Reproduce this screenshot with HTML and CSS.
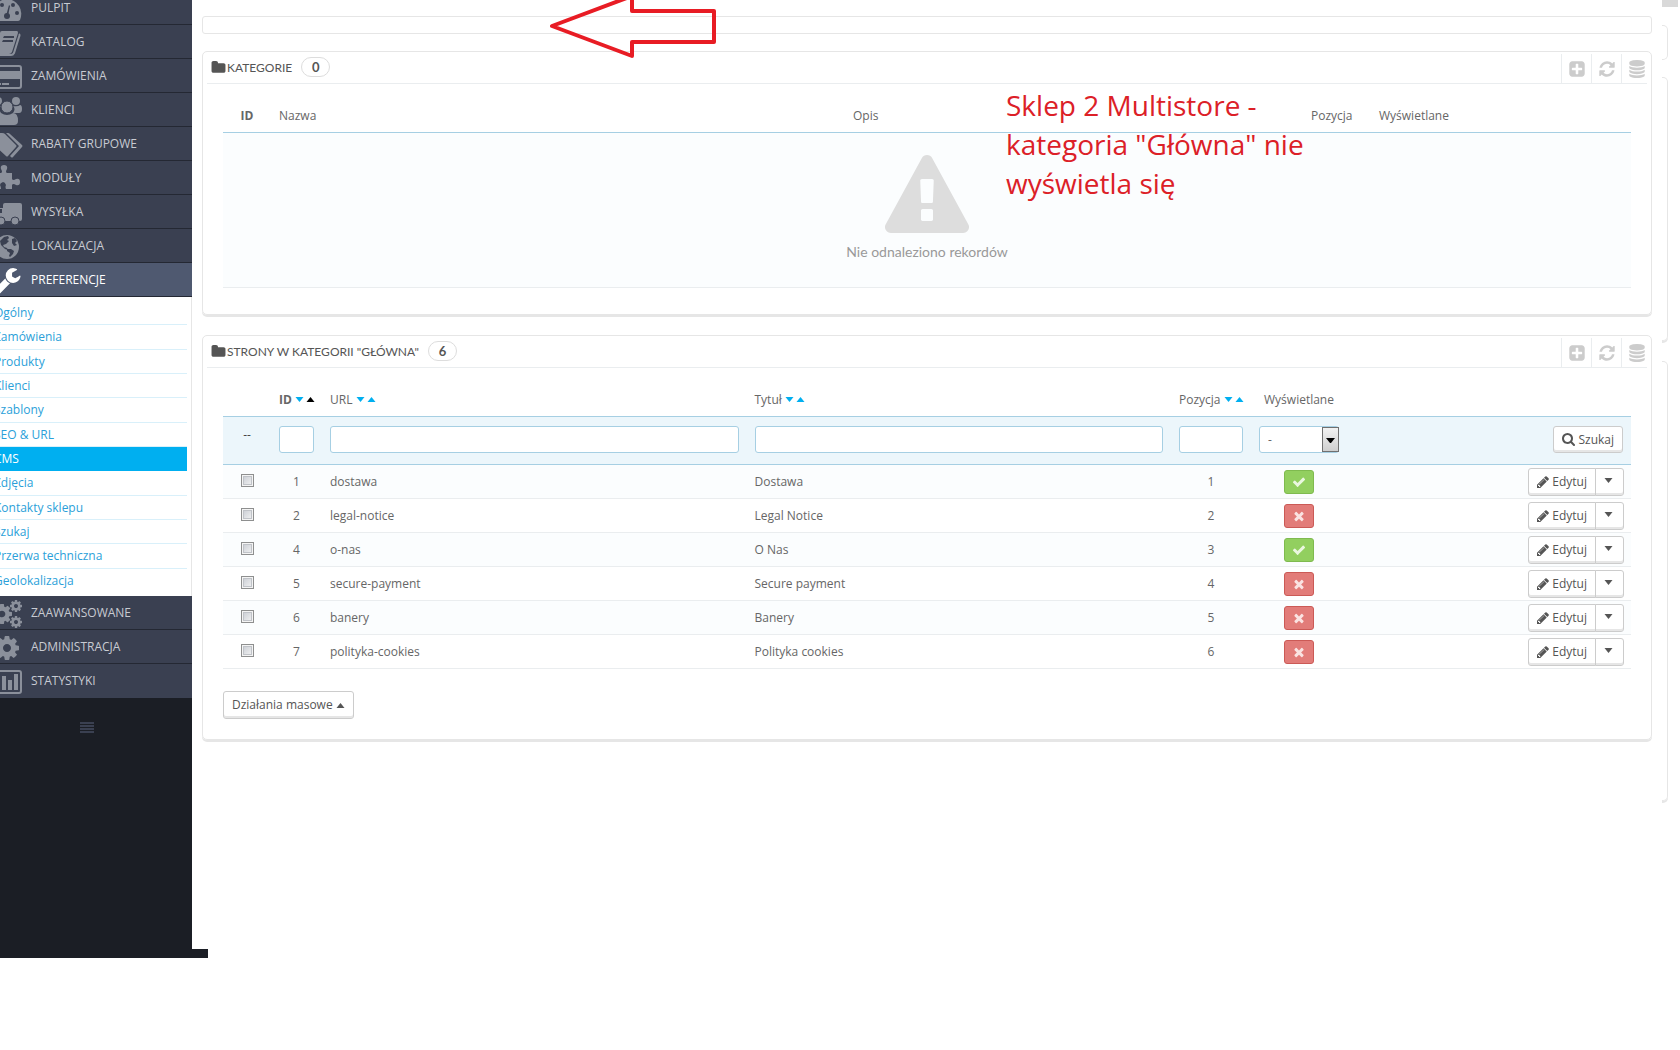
FILE: index.html
```
<!DOCTYPE html>
<html lang="pl">
<head>
    <meta charset="UTF-8">
    <meta name="viewport" content="width=device-width, initial-scale=1.0">
    <title>Preferencje - CMS</title>
    <link rel="stylesheet" href="styles.css">
</head>
<body>

<!-- icons used more than once -->
<svg class="sprite" aria-hidden="true">
    <symbol id="i-folder" viewBox="0 0 1792 1792"><path d="M1728 608v704q0 92-66 158t-158 66h-1216q-92 0-158-66t-66-158v-960q0-92 66-158t158-66h320q92 0 158 66t66 158v32h672q92 0 158 66t66 158z"/></symbol>
    <symbol id="i-plus" viewBox="0 0 1792 1792"><path d="M1408 960v-128q0-26-19-45t-45-19h-320v-320q0-26-19-45t-45-19h-128q-26 0-45 19t-19 45v320h-320q-26 0-45 19t-19 45v128q0 26 19 45t45 19h320v320q0 26 19 45t45 19h128q26 0 45-19t19-45v-320h320q26 0 45-19t19-45zm256-544v960q0 119-84.5 203.5t-203.5 84.5h-960q-119 0-203.5-84.5t-84.5-203.5v-960q0-119 84.5-203.5t203.5-84.5h960q119 0 203.5 84.5t84.5 203.5z"/></symbol>
    <symbol id="i-refresh" viewBox="0 0 1792 1792"><path d="M1639 1056q0 5-1 7-64 268-268 434.5t-478 166.5q-146 0-282.5-55t-243.5-157l-129 129q-19 19-45 19t-45-19-19-45v-448q0-26 19-45t45-19h448q26 0 45 19t19 45-19 45l-137 137q71 66 161 102t187 36q134 0 250-65t186-179q11-17 53-117 8-23 30-23h192q13 0 22.5 9.5t9.5 22.5zm25-800v448q0 26-19 45t-45 19h-448q-26 0-45-19t-19-45 19-45l138-138q-148-137-349-137-134 0-250 65t-186 179q-11 17-53 117-8 23-30 23h-199q-13 0-22.5-9.5t-9.5-22.5v-7q65-268 270-434.5t480-166.5q146 0 284 55.5t245 156.5l130-129q19-19 45-19t45 19 19 45z"/></symbol>
    <symbol id="i-database" viewBox="0 0 1792 1792"><path d="M896 768q237 0 443-43t325-127v170q0 69-103 128t-280 93.5-385 34.5-385-34.5-280-93.5-103-128v-170q119 84 325 127t443 43zm0 768q237 0 443-43t325-127v170q0 69-103 128t-280 93.5-385 34.5-385-34.5-280-93.5-103-128v-170q119 84 325 127t443 43zm0-384q237 0 443-43t325-127v170q0 69-103 128t-280 93.5-385 34.5-385-34.5-280-93.5-103-128v-170q119 84 325 127t443 43zm0-1152q208 0 385 34.5t280 93.5 103 128v128q0 69-103 128t-280 93.5-385 34.5-385-34.5-280-93.5-103-128v-128q0-69 103-128t280-93.5 385-34.5z"/></symbol>
    <symbol id="i-check" viewBox="0 0 1792 1792"><path d="M1671 566q0 40-28 68l-724 724-136 136q-28 28-68 28t-68-28l-136-136-362-362q-28-28-28-68t28-68l136-136q28-28 68-28t68 28l294 295 656-657q28-28 68-28t68 28l136 136q28 28 28 68z"/></symbol>
    <symbol id="i-times" viewBox="0 0 1792 1792"><path d="M1490 1322q0 40-28 68l-136 136q-28 28-68 28t-68-28l-294-294-294 294q-28 28-68 28t-68-28l-136-136q-28-28-28-68t28-68l294-294-294-294q-28-28-28-68t28-68l136-136q28-28 68-28t68 28l294 294 294-294q28-28 68-28t68 28l136 136q28 28 28 68t-28 68l-294 294 294 294q28 28 28 68z"/></symbol>
    <symbol id="i-pencil" viewBox="128 128 1536 1536"><path d="M491 1536l91-91-235-235-91 91v107h128v128h107zm523-928q0-22-22-22-10 0-17 7l-542 542q-7 7-7 17 0 22 22 22 10 0 17-7l542-542q7-7 7-17zm-54-192l416 416-832 832h-416v-416zm683 96q0 53-37 90l-166 166-416-416 166-165q36-38 90-38 53 0 91 38l235 234q37 39 37 91z"/></symbol>
    <symbol id="i-search" viewBox="64 128 1664 1664"><path d="M1216 832q0-185-131.5-316.5t-316.5-131.5-316.5 131.5-131.5 316.5 131.5 316.5 316.5 131.5 316.5-131.5 131.5-316.5zm512 832q0 52-38 90t-90 38q-54 0-90-38l-343-342q-179 124-399 124-143 0-273.5-55.5t-225-150-150-225-55.5-273.5 55.5-273.5 150-225 225-150 273.5-55.5 273.5 55.5 225 150 150 225 55.5 273.5q0 220-124 399l343 343q37 37 37 90z"/></symbol>
    <symbol id="i-cog" viewBox="128 128 1536 1536"><path d="M1152 896q0-106-75-181t-181-75-181 75-75 181 75 181 181 75 181-75 75-181zm512-109v222q0 12-8 23t-20 13l-185 28q-19 54-39 91 35 50 107 138 10 12 10 25t-9 23q-27 37-99 108t-94 71q-12 0-26-9l-138-108q-44 23-91 38-16 136-29 186-7 28-36 28h-222q-14 0-24.5-8.5t-11.5-21.5l-28-184q-49-16-90-37l-141 107q-10 9-25 9-14 0-25-11-126-114-165-168-7-10-7-23 0-12 8-23 15-21 51-66.5t54-70.5q-27-50-41-99l-183-27q-13-2-21-12.5t-8-23.5v-222q0-12 8-23t19-13l186-28q14-46 39-92-40-57-107-138-10-12-10-24 0-10 9-23 26-36 98.5-107.5t94.5-71.5q13 0 26 10l138 107q44-23 91-38 16-136 29-186 7-28 36-28h222q14 0 24.5 8.5t11.5 21.5l28 184q49 16 90 37l142-107q9-9 24-9 13 0 25 10 129 119 165 170 7 8 7 22 0 12-8 23-15 21-51 66.5t-54 70.5q26 50 41 98l183 28q13 2 21 12.5t8 23.5z"/></symbol>
    <symbol id="i-down" viewBox="0 0 8 5"><path d="M0 0h8L4 5z"/></symbol>
    <symbol id="i-up" viewBox="0 0 8 5"><path d="M0 5h8L4 0z"/></symbol>
</svg>

<div class="layout">
    <aside class="sidebar">
        <nav class="nav">
            <a class="nav-item" href="#">
                <svg class="nav-icon" viewBox="-8 0 32 34"><path d="M7 8a15 15 0 0 1 13 21q-1 1-2 1H-4q-1 0-2-1A15 15 0 0 1 7 8z"/><g class="cut"><circle cx="-3" cy="22" r="2"/><circle cx="2" cy="14" r="2"/><circle cx="13" cy="14" r="2"/><circle cx="17" cy="22" r="2"/><circle cx="7" cy="25" r="3"/><path d="M6 25l3-11 1 1-2 10z"/></g></svg>
                Pulpit</a>
            <a class="nav-item" href="#">
                <svg class="nav-icon" viewBox="-8 0 32 34"><path d="M2 6h15q1 0 1 2l-6 19q-1 2-3 2H-7L0 8q0-2 2-2z"/><path class="line" d="M19 9q1 1 0 3l-5 16q-1 2-3 2H-6"/><path class="cut" d="M4 11h10v2H3zM3 15h10v2H2z"/></svg>
                Katalog</a>
            <a class="nav-item" href="#">
                <svg class="nav-icon" viewBox="-8 0 32 34"><rect class="line" x="-7" y="7" width="28" height="22" rx="2"/><path d="M-7 12h28v8H-7zM-3 24h4v2h-4zM2 24h7v2H2z"/></svg>
                Zamówienia</a>
            <a class="nav-item" href="#">
                <svg class="nav-icon" viewBox="-8 0 32 34"><circle cx="-2" cy="8" r="4"/><circle cx="16" cy="8" r="4"/><path d="M13 13q5 1 7-1 2 0 2 4 0 4-3 4h-6q3-4 0-7zM1 13q-5 1-7-1-2 0-2 4 0 4 3 4h6q-3-4 0-7z"/><circle class="halo" cx="7" cy="14" r="6"/><path d="M1 20q6 4 12 0 5 0 5 8 0 4-4 4H0q-4 0-4-4 0-8 5-8z"/></svg>
                Klienci</a>
            <a class="nav-item" href="#">
                <svg class="nav-icon" viewBox="-8 0 32 34"><path d="M-8 8q0-2 2-2h8q2 0 3 1l11 11q1 1 0 2l-8 9q-1 1-2 0L-8 16z"/><path d="M6 6h2q1 0 2 1l12 11q1 1 0 2l-9 10q-1 1-2 0l-1-1 9-10z"/></svg>
                Rabaty grupowe</a>
            <a class="nav-item" href="#">
                <svg class="nav-icon" viewBox="-8 0 32 34"><path d="M-6 12h7q2-1 0-4-1-4 3-4t3 4q-2 3 0 4h5v6q1 2 4 0 4-1 4 3t-4 3q-3-2-4 0v4H6q-1-2 0-4-1-3-3-3-3 1-3 3 1 2 1 4h-7z"/></svg>
                Moduły</a>
            <a class="nav-item" href="#">
                <svg class="nav-icon" viewBox="-8 0 32 34"><path d="M5 8h15q2 0 2 2v14q0 2-2 2H-8v-9l5-4h6v-3q0-2 2-2z"/><path class="cut" d="M-6 18l4-4h4v4z"/><circle class="halo" cx="1" cy="26" r="4"/><circle class="halo" cx="15" cy="26" r="4"/></svg>
                Wysyłka</a>
            <a class="nav-item" href="#">
                <svg class="nav-icon" viewBox="-8 0 32 34"><circle cx="7" cy="18" r="12"/><path class="cut" d="M4 8l4-1 1 2-2 2 2 1-3 3-3 1 1 2 3 1 1 2-3-1-4-4-1-4zM12 10l3-1 2 3-2 2 2 2-3 1-2-3zM7 20l4 0 3 2-1 3-3 3-1-1 1-3-3-2z"/></svg>
                Lokalizacja</a>
            <a class="nav-item active" href="#">
                <svg class="nav-icon" viewBox="-8 0 32 34"><path transform="translate(-8 3) scale(.0165)" d="M1092 1052l-682 682q-37 37-90 37-52 0-91-37l-106-108q-38-36-38-90 0-53 38-91l681-681q39 98 114.5 173.5t173.5 114.5zm634-435q0 39-23 106-47 134-164.5 217.5t-258.5 83.5q-185 0-316.5-131.5t-131.5-316.5 131.5-316.5 316.5-131.5q58 0 121.5 16.5t107.5 46.5q16 11 16 28t-16 28l-293 169v224l193 107q5-3 79-48.5t135.5-81 70.5-35.5q15 0 23.5 10t8.5 25z"/></svg>
                Preferencje</a>

            <div class="submenu">
                <a href="#">Ogólny</a>
                <a href="#">Zamówienia</a>
                <a href="#">Produkty</a>
                <a href="#">Klienci</a>
                <a href="#">Szablony</a>
                <a href="#">SEO &amp; URL</a>
                <a href="#" class="current">CMS</a>
                <a href="#">Zdjęcia</a>
                <a href="#">Kontakty sklepu</a>
                <a href="#">Szukaj</a>
                <a href="#">Przerwa techniczna</a>
                <a href="#">Geolokalizacja</a>
            </div>

            <a class="nav-item" href="#">
                <svg class="nav-icon" viewBox="-8 0 32 34"><use href="#i-cog" x="-8" y="8" width="20" height="20"/><use href="#i-cog" x="10" y="4" width="12" height="12"/><use href="#i-cog" x="10" y="20" width="12" height="12"/></svg>
                Zaawansowane</a>
            <a class="nav-item" href="#">
                <svg class="nav-icon" viewBox="-8 0 32 34"><use href="#i-cog" x="-5" y="6" width="24" height="24"/></svg>
                Administracja</a>
            <a class="nav-item" href="#">
                <svg class="nav-icon" viewBox="-8 0 32 34"><rect class="line" x="-7" y="7" width="28" height="22" rx="2"/><path d="M-4 20h4v6h-4zM2 12h4v14H2zM8 16h4v10H8zM14 10h4v16h-4z"/></svg>
                Statystyki</a>
        </nav>
        <button class="collapse" type="button" aria-label="Zwiń menu">
            <svg width="14" height="11" viewBox="0 0 14 11"><path d="M0 0h14v2H0zM0 3h14v2H0zM0 6h14v2H0zM0 9h14v2H0z"/></svg>
        </button>
    </aside>

    <main class="content">
        <div class="toolbar"></div>

        <section class="panel">
            <header class="panel-head">
                <svg class="folder"><use href="#i-folder"/></svg>
                <h3>Kategorie</h3>
                <span class="count">0</span>
                <div class="tools">
                    <button type="button" aria-label="Dodaj"><svg><use href="#i-plus"/></svg></button>
                    <button type="button" aria-label="Odśwież"><svg><use href="#i-refresh"/></svg></button>
                    <button type="button" aria-label="Eksport SQL"><svg><use href="#i-database"/></svg></button>
                </div>
            </header>
            <table class="list categories">
                <colgroup><col class="c-check"><col><col class="c-desc"><col class="c-pos1"><col class="c-show1"></colgroup>
                <thead>
                    <tr>
                        <th class="sorted center">ID</th>
                        <th>Nazwa</th>
                        <th>Opis</th>
                        <th>Pozycja</th>
                        <th>Wyświetlane</th>
                    </tr>
                </thead>
                <tbody>
                    <tr>
                        <td class="empty" colspan="5">
                            <svg width="84" height="78" viewBox="0 0 1792 1664"><path d="M1024 1375v-190q0-14-9.500-23.500t-22.500-9.500h-192q-13 0-22.500 9.500t-9.500 23.500v190q0 14 9.500 23.500t22.500 9.500h192q13 0 22.500-9.500t9.500-23.500zm-2-374l18-459q0-12-10-19-13-11-24-11h-220q-11 0-24 11-10 7-10 21l17 457q0 10 10 16.500t24 6.500h185q14 0 23.500-6.500t10.500-16.500zm-14-934l768 1408q35 63-2 126-17 29-46.500 46t-63.500 17h-1536q-34 0-63.500-17t-46.500-46q-37-63-2-126l768-1408q17-31 47-49t65-18 65 18 47 49z"/></svg>
                            <p>Nie odnaleziono rekordów</p>
                        </td>
                    </tr>
                </tbody>
            </table>
        </section>

        <section class="panel">
            <header class="panel-head">
                <svg class="folder"><use href="#i-folder"/></svg>
                <h3>Strony w kategorii "Główna"</h3>
                <span class="count">6</span>
                <div class="tools">
                    <button type="button" aria-label="Dodaj"><svg><use href="#i-plus"/></svg></button>
                    <button type="button" aria-label="Odśwież"><svg><use href="#i-refresh"/></svg></button>
                    <button type="button" aria-label="Eksport SQL"><svg><use href="#i-database"/></svg></button>
                </div>
            </header>
            <table class="list pages">
                <colgroup><col class="c-check"><col class="c-id"><col><col><col class="c-pos"><col class="c-show"><col class="c-act"></colgroup>
                <thead>
                    <tr>
                        <th></th>
                        <th class="sorted">ID <svg class="sort"><use href="#i-down"/></svg><svg class="sort on"><use href="#i-up"/></svg></th>
                        <th>URL <svg class="sort"><use href="#i-down"/></svg><svg class="sort"><use href="#i-up"/></svg></th>
                        <th>Tytuł <svg class="sort"><use href="#i-down"/></svg><svg class="sort"><use href="#i-up"/></svg></th>
                        <th>Pozycja <svg class="sort"><use href="#i-down"/></svg><svg class="sort"><use href="#i-up"/></svg></th>
                        <th class="center">Wyświetlane</th>
                        <th></th>
                    </tr>
                    <tr class="filter">
                        <td class="dashes">--</td>
                        <td><input type="text" aria-label="ID"></td>
                        <td><input type="text" aria-label="URL"></td>
                        <td><input type="text" aria-label="Tytuł"></td>
                        <td><input type="text" aria-label="Pozycja"></td>
                        <td><div class="select"><select aria-label="Wyświetlane"><option>-</option><option>Tak</option><option>Nie</option></select><svg viewBox="0 0 15 23"><path d="M3 10h9l-4 5h-1z"/></svg></div></td>
                        <td class="right"><button class="btn" type="button"><svg class="ico-search"><use href="#i-search"/></svg>Szukaj</button></td>
                    </tr>
                </thead>
                <tbody>
                    <tr>
                        <td class="center"><input type="checkbox" aria-label="dostawa"></td>
                        <td class="center">1</td>
                        <td>dostawa</td>
                        <td>Dostawa</td>
                        <td class="center">1</td>
                        <td class="center"><button class="state yes" type="button" aria-label="Tak"><svg><use href="#i-check"/></svg></button></td>
                        <td class="right"><div class="group"><button class="btn" type="button"><svg><use href="#i-pencil"/></svg>Edytuj</button><button class="btn more" type="button" aria-label="Więcej"><svg><use href="#i-down"/></svg></button></div></td>
                    </tr>
                    <tr>
                        <td class="center"><input type="checkbox" aria-label="legal-notice"></td>
                        <td class="center">2</td>
                        <td>legal-notice</td>
                        <td>Legal Notice</td>
                        <td class="center">2</td>
                        <td class="center"><button class="state no" type="button" aria-label="Nie"><svg><use href="#i-times"/></svg></button></td>
                        <td class="right"><div class="group"><button class="btn" type="button"><svg><use href="#i-pencil"/></svg>Edytuj</button><button class="btn more" type="button" aria-label="Więcej"><svg><use href="#i-down"/></svg></button></div></td>
                    </tr>
                    <tr>
                        <td class="center"><input type="checkbox" aria-label="o-nas"></td>
                        <td class="center">4</td>
                        <td>o-nas</td>
                        <td>O Nas</td>
                        <td class="center">3</td>
                        <td class="center"><button class="state yes" type="button" aria-label="Tak"><svg><use href="#i-check"/></svg></button></td>
                        <td class="right"><div class="group"><button class="btn" type="button"><svg><use href="#i-pencil"/></svg>Edytuj</button><button class="btn more" type="button" aria-label="Więcej"><svg><use href="#i-down"/></svg></button></div></td>
                    </tr>
                    <tr>
                        <td class="center"><input type="checkbox" aria-label="secure-payment"></td>
                        <td class="center">5</td>
                        <td>secure-payment</td>
                        <td>Secure payment</td>
                        <td class="center">4</td>
                        <td class="center"><button class="state no" type="button" aria-label="Nie"><svg><use href="#i-times"/></svg></button></td>
                        <td class="right"><div class="group"><button class="btn" type="button"><svg><use href="#i-pencil"/></svg>Edytuj</button><button class="btn more" type="button" aria-label="Więcej"><svg><use href="#i-down"/></svg></button></div></td>
                    </tr>
                    <tr>
                        <td class="center"><input type="checkbox" aria-label="banery"></td>
                        <td class="center">6</td>
                        <td>banery</td>
                        <td>Banery</td>
                        <td class="center">5</td>
                        <td class="center"><button class="state no" type="button" aria-label="Nie"><svg><use href="#i-times"/></svg></button></td>
                        <td class="right"><div class="group"><button class="btn" type="button"><svg><use href="#i-pencil"/></svg>Edytuj</button><button class="btn more" type="button" aria-label="Więcej"><svg><use href="#i-down"/></svg></button></div></td>
                    </tr>
                    <tr>
                        <td class="center"><input type="checkbox" aria-label="polityka-cookies"></td>
                        <td class="center">7</td>
                        <td>polityka-cookies</td>
                        <td>Polityka cookies</td>
                        <td class="center">6</td>
                        <td class="center"><button class="state no" type="button" aria-label="Nie"><svg><use href="#i-times"/></svg></button></td>
                        <td class="right"><div class="group"><button class="btn" type="button"><svg><use href="#i-pencil"/></svg>Edytuj</button><button class="btn more" type="button" aria-label="Więcej"><svg><use href="#i-down"/></svg></button></div></td>
                    </tr>
                </tbody>
            </table>
            <button class="btn bulk" type="button">Działania masowe <svg><use href="#i-up"/></svg></button>
        </section>
    </main>

    <!-- edge of the window behind -->
    <div class="rail">
        <div class="rail-scroll"></div>
        <div class="rail-box small"></div>
        <div class="rail-box mid"></div>
        <div class="rail-box tall"></div>
    </div>
</div>
<div class="bottom-strip"></div>

<!-- red marks drawn over the page -->
<svg class="arrow" width="180" height="62" viewBox="0 0 180 62"><path d="M11 26L91-4V11H173V42H91V56z"/></svg>
<p class="note">Sklep 2 Multistore -<br>kategoria "Główna" nie<br>wyświetla się</p>

</body>
</html>
```
FILE: styles.css
```
*{
    box-sizing: border-box;
}
body{
    margin: 0;
    position: relative;
    background: #fff;
    color: #666;
    font: 12px/18px "Open Sans", "Noto Sans", sans-serif;
    overflow-x: hidden;
}
a{
    text-decoration: none;
}
button, input, select{
    font: inherit;
    color: inherit;
}
button{
    padding: 0;
    cursor: pointer;
}
svg{
    fill: currentColor;
}
.sprite{
    position: absolute;
    width: 0;
    height: 0;
}
.layout{
    display: grid;
    grid-template-columns: 192px minmax(0, 1fr) 18px;
    min-height: 949px;
}
.bottom-strip{
    width: 208px;
    height: 9px;
    background: #1b1e25;
}

/* sidebar, scrolled a little up and to the left */
.sidebar{
    background: #1b1e25;
    overflow: hidden;
}
.nav{
    margin: -9px 0 0 -8px;
}
.nav-item{
    display: flex;
    align-items: center;
    gap: 7px;
    height: 34px;
    border-bottom: 1px solid #242833;
    background: #3a4051;
    color: #c8cbd2;
    font-size: 12px;
    text-transform: uppercase;
}
.nav-item:last-child{
    border-bottom: 0;
}
.nav-icon{
    width: 32px;
    height: 34px;
    color: #8b909b;
}
.nav-icon .cut{
    fill: #3a4051;
}
.nav-icon .line{
    fill: none;
    stroke: currentColor;
    stroke-width: 2;
}
.nav-icon .halo{
    stroke: #3a4051;
    stroke-width: 1;
}
.nav-item.active{
    background: #4f5970;
    color: #fff;
}
.active .nav-icon{
    color: #fff;
}
.submenu{
    display: flex;
    flex-direction: column;
    min-height: 299px;
    padding: 4px 4px 4px 0;
    background: #fff;
    border-right: 1px solid #e6e6e6;
}
.submenu a{
    flex: 1;
    padding-left: 2px;
    border-bottom: 1px solid #d9f0fa;
    color: #2b9fd9;
    line-height: 23px;
}
.submenu .current{
    background: #00aff0;
    border-color: #00aff0;
    color: #fff;
}
.submenu a:last-child{
    border-bottom: 0;
}
.collapse{
    display: block;
    margin: 22px 0 0 80px;
    border: 0;
    background: none;
    color: #3a4051;
}

/* content */
.content{
    padding: 16px 10px 0;
}
.toolbar{
    height: 18px;
    margin-bottom: 17px;
    border: 1px solid #e6e6e6;
    border-radius: 3px;
}
.panel{
    margin-bottom: 20px;
    padding-bottom: 20px;
    border: 1px solid #e6e6e6;
    border-radius: 5px;
    box-shadow: 0 2px 0 #e6e6e6;
}
.panel-head{
    display: flex;
    align-items: center;
    height: 32px;
    margin: 0 4px;
    padding-left: 4px;
    border-bottom: 1px solid #eaedef;
    color: #555;
}
.panel-head h3{
    margin: 0 9px 0 1px;
    font: 12px/20px "Ubuntu Condensed", Lato, sans-serif;
    text-transform: uppercase;
}
.folder{
    width: 15px;
    height: 15px;
}
.count{
    width: 29px;
    height: 20px;
    margin-bottom: 6px;
    border: 1px solid #ddd;
    border-radius: 10px;
    font: bold 13px/18px "Ubuntu Condensed", Lato, sans-serif;
    text-align: center;
    align-self: flex-end;
}
.tools{
    display: flex;
    align-self: flex-end;
    margin: 0 -4px 0 auto;
}
.tools button{
    display: flex;
    align-items: center;
    justify-content: center;
    width: 30px;
    height: 29px;
    border: 0;
    border-left: 1px solid #eaedef;
    background: none;
    color: #ccc;
}
.tools svg{
    width: 18px;
    height: 18px;
}

/* tables */
.list{
    width: calc(100% - 40px);
    margin: 13px 20px 0;
    table-layout: fixed;
    border-collapse: separate;
    border-spacing: 0;
}
.c-check{ width: 48px; }
.c-id{ width: 51px; }
.c-pos{ width: 80px; }
.c-show{ width: 96px; }
.c-act{ width: 284px; }
.c-desc{ width: 458px; }
.c-pos1{ width: 68px; }
.c-show1{ width: 260px; }
.list th{
    height: 36px;
    padding: 2px 8px 0;
    border-bottom: 1px solid #a6cfe3;
    font-weight: normal;
    text-align: left;
    white-space: nowrap;
}
.list .sorted{
    font-weight: bold;
}
.list td{
    height: 34px;
    padding: 0 8px;
    border-bottom: 1px solid #eaedef;
}
.list tbody tr:nth-child(odd){
    background: #fbfdfe;
}
.list .center{
    text-align: center;
}
.list .right{
    text-align: right;
}
.list .empty{
    height: 155px;
    padding-bottom: 4px;
    color: #ddd;
    text-align: center;
}
.empty svg{
    display: block;
    margin: 0 auto;
}
.empty p{
    margin: 9px 0 0;
    color: #999;
    font: 14px/20px "Ubuntu Condensed", Lato, sans-serif;
}
.categories{
    margin-bottom: 6px;
}
.pages{
    margin-bottom: 22px;
}
.sort{
    width: 9px;
    height: 5px;
    margin-right: 2px;
    color: #00aff0;
    vertical-align: 2px;
}
.sort.on{
    color: #000;
}
.sort:last-child{
    margin-right: 0;
}
.filter{
    background: #ecf6fb;
}
.list .filter td{
    height: 48px;
    padding-top: 9px;
    border-color: #a6cfe3;
    vertical-align: top;
}
.list .dashes{
    color: #444;
    text-align: center;
}
.filter input, .filter select{
    display: block;
    width: 100%;
    height: 27px;
    padding: 0 8px;
    border: 1px solid #a6cfe3;
    border-radius: 3px;
    background: #fff;
}
.filter select{
    appearance: none;
}
.select{
    position: relative;
}
.select svg{
    position: absolute;
    top: 1px;
    right: 0;
    width: 17px;
    height: 25px;
    border: 1px solid #707070;
    background: linear-gradient(#f2f2f2, #cfcfcf);
    color: #000;
    pointer-events: none;
}
input[type="checkbox"]{
    appearance: none;
    display: block;
    width: 13px;
    height: 13px;
    margin: 0 auto 3px;
    border: 1px solid #8e8f8f;
    background: linear-gradient(135deg, #c5c9d0, #f6f6f6);
    box-shadow: inset 0 0 0 1px #f4f4f4, inset 0 0 0 2px #c0c3c8;
}
.state{
    display: flex;
    align-items: center;
    justify-content: center;
    width: 30px;
    height: 24px;
    margin: 0 auto;
    border: 1px solid #7fba4f;
    border-radius: 3px;
    background: #92cf5f;
    color: #eaf7df;
}
.state.no{
    border-color: #cb5a56;
    background: #e27c79;
    color: #fae3e2;
}
.state svg{
    width: 14px;
    height: 14px;
}
.btn{
    display: inline-flex;
    align-items: center;
    gap: 3px;
    height: 28px;
    padding: 0 8px;
    border: 1px solid #ccc;
    border-radius: 3px;
    background: #fff;
    box-shadow: inset 0 -2px 0 #e6e6e6;
    color: #555;
}
.btn svg{
    width: 12px;
    height: 12px;
}
.btn .ico-search{
    width: 13px;
    height: 13px;
}
.filter .btn{
    height: 27px;
}
.group{
    display: inline-flex;
    margin-right: -1px;
    vertical-align: middle;
}
.group .btn:first-child{
    border-radius: 3px 0 0 3px;
}
.group .more{
    margin-left: -1px;
    padding: 0 10px 2px 8px;
    border-radius: 0 3px 3px 0;
}
.more svg, .bulk svg{
    width: 9px;
    height: 5px;
}
.bulk{
    margin-left: 20px;
}

/* right edge */
.rail-scroll{
    width: 16px;
    height: 7px;
    margin-bottom: 18px;
    background: #d9d9d9;
}
.rail-box{
    width: 6px;
    border: 1px solid #e6e6e6;
    border-left: 0;
    border-radius: 0 5px 5px 0;
}
.rail-box.small{
    height: 35px;
    margin-bottom: 17px;
}
.rail-box.mid{
    height: 264px;
    margin-bottom: 20px;
    box-shadow: 0 2px 0 #e6e6e6;
}
.rail-box.tall{
    height: 440px;
    box-shadow: 0 2px 0 #e6e6e6;
}

/* red marks */
.arrow{
    position: absolute;
    top: 0;
    left: 541px;
    fill: none;
    stroke: #e81c24;
    stroke-width: 4;
    stroke-linejoin: round;
}
.note{
    position: absolute;
    top: 86px;
    left: 1006px;
    margin: 0;
    color: #dc2027;
    font: 28px/39px "Open Sans", sans-serif;
    white-space: nowrap;
}
```
